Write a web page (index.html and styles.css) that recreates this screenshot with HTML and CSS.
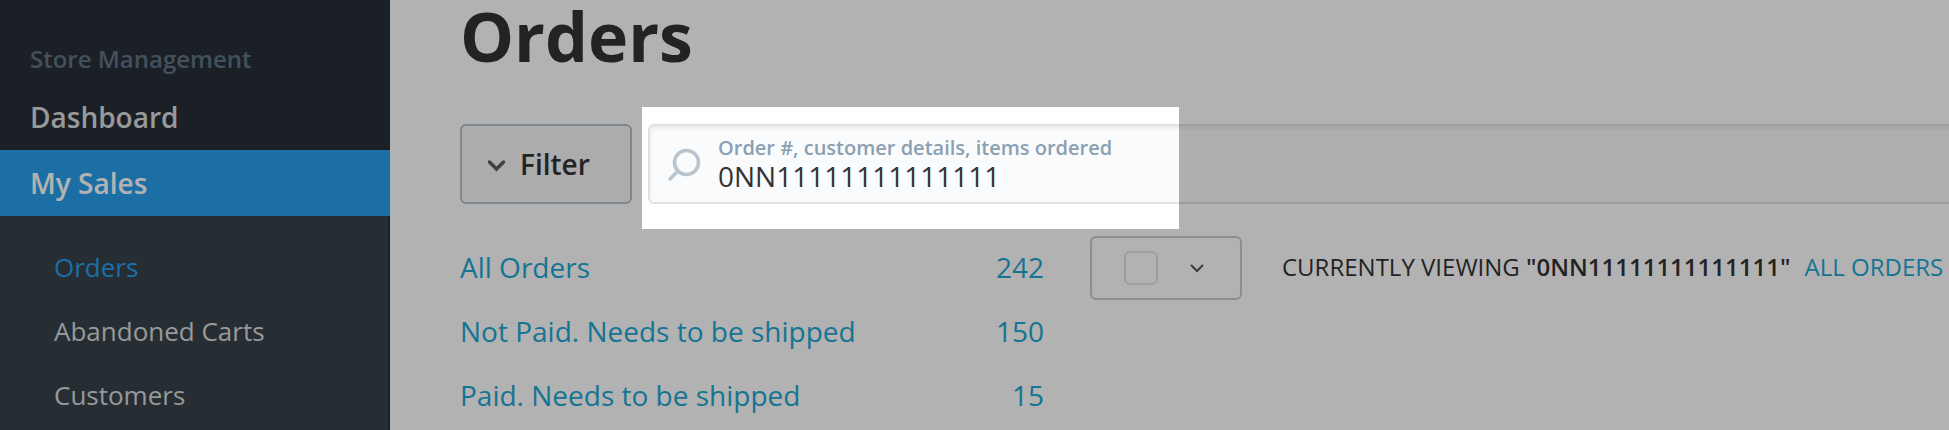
FILE: index.html
```
<!DOCTYPE html>
<html lang="en">
<head>
    <meta charset="UTF-8">
    <meta name="viewport" content="width=device-width, initial-scale=1.0">
    <title>Orders</title>
    <link rel="stylesheet" href="styles.css">
</head>
<body>
    <div class="page">
        <nav class="sidebar" aria-label="Store">
            <h2 class="sidebar-title">Store Management</h2>
            <a href="#" class="nav-item">Dashboard</a>
            <a href="#" class="nav-item active">My Sales</a>
            <div class="subnav">
                <a href="#" class="subnav-item current">Orders</a>
                <a href="#" class="subnav-item">Abandoned Carts</a>
                <a href="#" class="subnav-item">Customers</a>
            </div>
        </nav>

        <main class="content">
            <h1>Orders</h1>

            <div class="toolbar">
                <button type="button" class="filter-button">
                    <svg width="20" height="16" viewBox="0 0 20 16" aria-hidden="true">
                        <path d="M3.500 6l7 7 7-7" fill="none" stroke="#5c5c5c" stroke-width="3.500" stroke-linecap="round" stroke-linejoin="miter"/>
                    </svg>
                    Filter
                </button>
                <div class="search">
                    <svg class="search-icon" width="34" height="34" viewBox="0 0 34 34" aria-hidden="true">
                        <circle cx="18.500" cy="15.500" r="12" fill="none" stroke="#b8c4ce" stroke-width="3.500"/>
                        <path d="M10 24l-8 8" fill="none" stroke="#b8c4ce" stroke-width="3.500" stroke-linecap="round"/>
                    </svg>
                    <div class="search-field">
                        <label for="search-input">Order #, customer details, items ordered</label>
                        <input type="text" id="search-input" value="0NN11111111111111">
                    </div>
                    <div class="spotlight"></div>
                </div>
            </div>

            <div class="results">
                <ul class="filters">
                    <li><a href="#">All Orders <span>242</span></a></li>
                    <li><a href="#">Not Paid. Needs to be shipped <span>150</span></a></li>
                    <li><a href="#">Paid. Needs to be shipped <span>15</span></a></li>
                </ul>

                <div class="select-all">
                    <input type="checkbox" aria-label="Select all orders">
                    <button type="button" aria-label="Selection options">
                        <svg width="14" height="10" viewBox="0 0 14 10" aria-hidden="true">
                            <path d="M1.500 2.500l5.500 5.500 5.500-5.500" fill="none" stroke="#555" stroke-width="2" stroke-linecap="round"/>
                        </svg>
                    </button>
                </div>

                <p class="viewing">CURRENTLY VIEWING <b>"0NN11111111111111"</b> <a href="#">ALL ORDERS</a></p>
            </div>
        </main>
    </div>
</body>
</html>
```
FILE: styles.css
```
* {
    box-sizing: border-box;
}

body {
    margin: 0;
    font-family: "Open Sans", "Noto Sans", sans-serif;
    font-size: 28px;
    color: #333;
    background-color: #fff;
    overflow: hidden;
}

a {
    color: #1fa7d3;
    text-decoration: none;
}

.page {
    display: flex;
    min-height: 100vh;
}

/* Sidebar */
.sidebar {
    display: flex;
    flex-direction: column;
    flex: 0 0 390px;
    background-color: #272f38;
}

.sidebar-title {
    margin: 0;
    padding: 42px 30px 16px;
    font-size: 24px;
    font-weight: 600;
    line-height: 34px;
    color: #607585;
}

.nav-item {
    padding: 0 30px;
    font-weight: 600;
    line-height: 50px;
    color: #d8dbdd;
}

.nav-item.active {
    margin-top: 8px;
    line-height: 66px;
    color: #fff;
    background-color: #299fec;
}

.subnav {
    flex: 1;
    padding: 20px 0 0 54px;
    background-color: #38424a;
    border-right: 2px solid #272f38;
}

.subnav-item {
    display: block;
    padding-bottom: 2px;
    font-size: 26px;
    line-height: 62px;
    color: #d8dbdd;
}

.subnav-item.current {
    color: #299fec;
}

/* Content */
.content {
    flex: 1;
    min-width: 0;
    padding-left: 70px;
}

h1 {
    margin: 0 0 52px;
    font-size: 68px;
    font-weight: 700;
    line-height: 72px;
}

.toolbar {
    display: flex;
    gap: 16px;
    height: 80px;
    margin-right: -8px;
}

.filter-button {
    display: flex;
    align-items: center;
    gap: 14px;
    width: 172px;
    padding: 0 0 0 24px;
    font: inherit;
    font-weight: 600;
    color: #333;
    background-color: #f6f6f6;
    border: 2px solid #b7c2cc;
    border-radius: 6px;
}

.search {
    position: relative;
    display: flex;
    align-items: center;
    flex: 1;
    gap: 16px;
    padding-left: 18px;
    background-color: #fafbfd;
    border: 2px solid #e0e1e2;
    border-radius: 6px;
    box-shadow: inset 0 3px 4px rgba(0, 0, 0, 0.06);
}

.search-field {
    flex: 1;
    padding-bottom: 2px;
}

.search-field label {
    display: block;
    font-size: 20px;
    font-weight: 600;
    line-height: 26px;
    color: #8ba0b0;
}

.search-field input {
    display: block;
    width: 100%;
    height: 30px;
    padding: 0;
    font: inherit;
    line-height: 30px;
    color: #333;
    background: none;
    border: 0;
    outline: 0;
}

/* Dims everything around the search text */
.spotlight {
    position: absolute;
    top: -19px;
    left: -8px;
    width: 537px;
    height: 122px;
    box-shadow: 0 0 0 2000px rgba(0, 0, 0, 0.3);
    pointer-events: none;
}

.results {
    display: flex;
    align-items: flex-start;
    padding-top: 32px;
}

.filters {
    flex: 0 0 584px;
    margin: 0;
    padding: 0;
    list-style: none;
}

.filters a {
    display: flex;
    justify-content: space-between;
    padding-bottom: 2px;
    line-height: 62px;
}

.select-all {
    display: flex;
    align-items: center;
    flex: 0 0 152px;
    height: 64px;
    margin: 0 40px 0 46px;
    padding-left: 32px;
    border: 2px solid #ccc;
    border-radius: 6px;
}

.select-all input {
    appearance: none;
    width: 34px;
    height: 34px;
    margin: 0;
    border: 2px solid #e2e2e2;
    border-radius: 6px;
}

.select-all button {
    display: flex;
    padding: 0 32px;
    background: none;
    border: 0;
}

.viewing {
    margin: 0;
    font-size: 24px;
    line-height: 62px;
    white-space: nowrap;
}

.viewing b {
    font-weight: 600;
}

.viewing a {
    margin-left: 8px;
}
```
